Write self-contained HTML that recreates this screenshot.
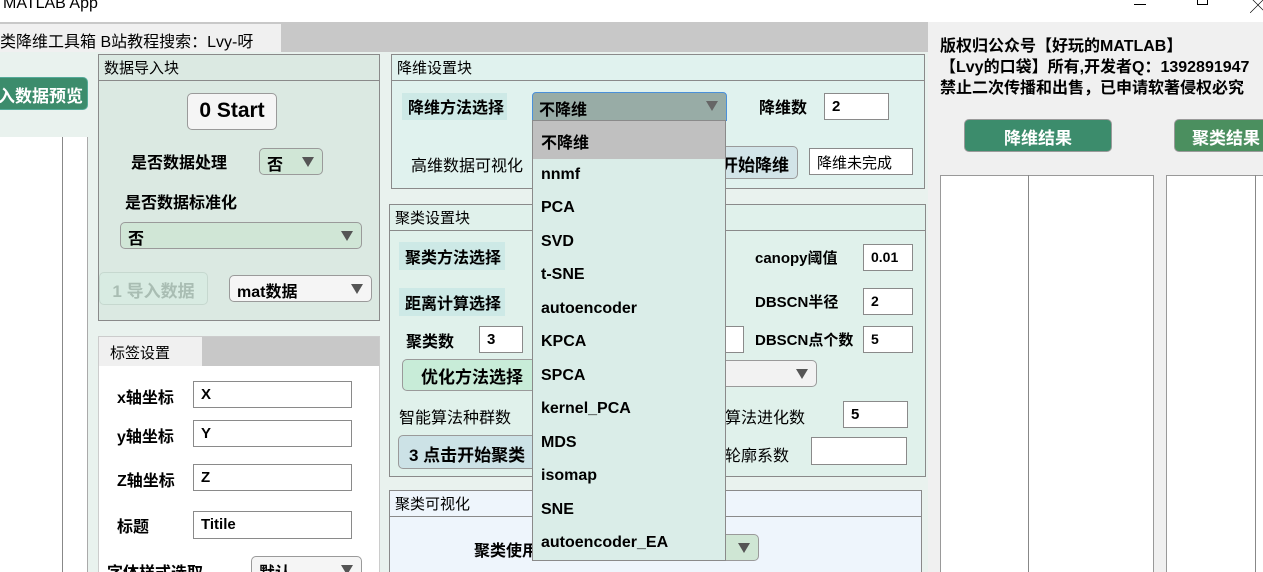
<!DOCTYPE html>
<html><head><meta charset="utf-8"><style>
*{margin:0;padding:0;box-sizing:border-box}
html,body{width:1263px;height:572px;overflow:hidden}
body{position:relative;background:#e9f2ee;font-family:"Liberation Sans","Noto Sans CJK SC",sans-serif;font-size:16px;color:#000}
div{white-space:nowrap}
.a{position:absolute}
.b{font-weight:bold}
.panel{position:absolute;border:1px solid #8a8a8a}
.hdr{position:absolute;left:0;right:0;top:0;height:26px;border-bottom:1px solid #8a8a8a;padding:2px 5px;font-size:15px}
.inp{position:absolute;background:#fff;border:1px solid #8a8a8a;padding:4px 7px;font-weight:bold;font-size:15px}
.dd{position:absolute;border:1px solid #9a9a9a;border-radius:5px;padding:2px 7px;font-weight:bold}
.arr{position:absolute;right:8px;top:8px;width:0;height:0;border-left:6px solid transparent;border-right:6px solid transparent;border-top:10px solid #555}
.btn{position:absolute;border:1px solid #9a9a9a;border-radius:5px;font-weight:bold;text-align:center}
.it{position:absolute;left:0;right:0;height:34px;padding:4px 8px;font-weight:bold}
</style></head><body>
<div class="a" style="left:0;top:0;width:1263px;height:22px;background:#fff"></div>
<div class="a" style="left:3px;top:-5px;font-size:16px">MATLAB App</div>
<div class="a" style="left:1134px;top:4px;width:12px;height:1px;background:#000"></div>
<div class="a" style="left:1197px;top:-6px;width:11px;height:11px;border:1px solid #000"></div>
<div class="a" style="left:1250px;top:-8px;font-size:16px">╳</div>
<div class="a" style="left:0;top:22px;width:928px;height:30px;background:#c8c8c8"></div>
<div class="a" style="left:0;top:24px;width:281px;height:28px;background:#f0f0f0;padding:4px 0 0 0;font-size:16px">类降维工具箱 B站教程搜索：Lvy-呀</div>

<div class="btn" style="left:-10px;top:77px;width:98px;height:33px;background:#3c8c6c;color:#fff;border-color:#5a9;padding-top:4px;font-size:17px;text-align:right;padding-right:4px">入数据预览</div>
<div class="a" style="left:0;top:137px;width:88px;height:440px;background:#fff;border-right:1px solid #aaa"></div>
<div class="a" style="left:62px;top:137px;width:1px;height:440px;background:#888"></div>

<div class="panel" style="left:98px;top:54px;width:282px;height:267px;background:#dbe9e2">
<div class="hdr">数据导入块</div>
<div class="btn" style="left:88px;top:38px;width:90px;height:37px;background:#f5f5f5;font-size:21px;padding-top:5px">0 Start</div>
<div class="a b" style="left:32px;top:94px">是否数据处理</div>
<div class="dd" style="left:160px;top:93px;width:64px;height:27px;background:#d0e6d6">否<span class="arr"></span></div>
<div class="a b" style="left:26px;top:134px">是否数据标准化</div>
<div class="dd" style="left:21px;top:167px;width:242px;height:27px;background:#d0e6d6">否<span class="arr"></span></div>
<div class="btn" style="left:0;top:217px;width:109px;height:33px;background:#d8ebe2;color:#a9bdb3;border-color:#c6d8cf;padding-top:4px;font-size:17px">1 导入数据</div>
<div class="dd" style="left:130px;top:220px;width:143px;height:27px;background:#f5f5f5">mat数据<span class="arr"></span></div>
</div>

<div class="a" style="left:98px;top:336px;width:282px;height:236px;background:#fff;border:1px solid #ccc;border-bottom:none"></div>
<div class="a" style="left:99px;top:337px;width:280px;height:29px;background:#c8c8c8"></div>
<div class="a" style="left:99px;top:337px;width:103px;height:29px;background:#f0f0f0;padding:5px 11px;font-size:15px">标签设置</div>
<div class="a b" style="left:117px;top:384px">x轴坐标</div><div class="inp" style="left:193px;top:381px;width:159px;height:27px">X</div>
<div class="a b" style="left:117px;top:423px">y轴坐标</div><div class="inp" style="left:193px;top:420px;width:159px;height:27px">Y</div>
<div class="a b" style="left:117px;top:467px">Z轴坐标</div><div class="inp" style="left:193px;top:464px;width:159px;height:27px">Z</div>
<div class="a b" style="left:117px;top:513px">标题</div><div class="inp" style="left:193px;top:511px;width:159px;height:28px">Titile</div>
<div class="a b" style="left:107px;top:559px">字体样式选取</div>
<div class="dd" style="left:251px;top:556px;width:111px;height:27px;background:#f5f5f5">默认<span class="arr"></span></div>

<div class="panel" style="left:391px;top:54px;width:534px;height:135px;background:#e0f2ee">
<div class="hdr">降维设置块</div>
<div class="a b" style="left:10px;top:38px;width:105px;height:27px;background:#cde9e6;padding:1px 6px">降维方法选择</div>
<div class="a b" style="left:367px;top:39px">降维数</div>
<div class="inp" style="left:432px;top:38px;width:65px;height:27px">2</div>
<div class="a" style="left:19px;top:97px">高维数据可视化</div>
<div class="btn" style="left:300px;top:91px;width:106px;height:33px;background:#d2e4e8;padding-top:4px;font-size:17px;text-align:right;padding-right:8px">开始降维</div>
<div class="inp" style="left:417px;top:93px;width:104px;height:27px;font-weight:normal;padding-top:3px">降维未完成</div>
</div>

<div class="panel" style="left:389px;top:204px;width:537px;height:273px;background:#e0f1eb">
<div class="hdr">聚类设置块</div>
<div class="a b" style="left:9px;top:37px;width:106px;height:28px;background:#cde9e6;padding:2px 6px">聚类方法选择</div>
<div class="a b" style="left:9px;top:83px;width:106px;height:28px;background:#cde9e6;padding:2px 6px">距离计算选择</div>
<div class="a b" style="left:16px;top:123px">聚类数</div>
<div class="inp" style="left:89px;top:121px;width:44px;height:27px">3</div>
<div class="inp" style="left:310px;top:121px;width:44px;height:27px"></div>
<div class="a b" style="left:365px;top:42px;font-size:15px">canopy阈值</div>
<div class="inp" style="left:473px;top:39px;width:50px;height:27px;font-size:14px">0.01</div>
<div class="a b" style="left:365px;top:86px;font-size:15px">DBSCN半径</div>
<div class="inp" style="left:473px;top:83px;width:50px;height:27px;font-size:14px">2</div>
<div class="a b" style="left:365px;top:124px;font-size:15px">DBSCN点个数</div>
<div class="inp" style="left:473px;top:121px;width:50px;height:27px;font-size:14px">5</div>
<div class="btn" style="left:12px;top:154px;width:140px;height:32px;background:#c8ecd8;padding-top:3px;font-size:17px">优化方法选择</div>
<div class="dd" style="left:300px;top:155px;width:127px;height:27px;background:#f2f2f2"><span class="arr"></span></div>
<div class="a" style="left:9px;top:199px">智能算法种群数</div>
<div class="a" style="left:319px;top:199px">能算法进化数</div>
<div class="inp" style="left:453px;top:196px;width:65px;height:27px">5</div>
<div class="btn" style="left:8px;top:230px;width:140px;height:34px;background:#cce2e6;padding-top:5px;font-size:17px;text-align:left;padding-left:10px">3 点击开始聚类</div>
<div class="a" style="left:319px;top:237px">类轮廓系数</div>
<div class="inp" style="left:421px;top:232px;width:96px;height:28px"></div>
</div>

<div class="panel" style="left:389px;top:490px;width:533px;height:90px;background:#eef5fc">
<div class="hdr">聚类可视化</div>
<div class="a b" style="left:84px;top:46px">聚类使用</div>
<div class="dd" style="left:300px;top:43px;width:69px;height:27px;background:#cfe6d4"><span class="arr"></span></div>
</div>

<div class="a b" style="left:532px;top:92px;width:195px;height:29px;background:#98aca6;border:1px solid #4a90d9;border-radius:4px 4px 0 0;padding:3px 6px">不降维<span class="arr" style="border-top-color:#666;top:8px"></span></div>
<div class="a" style="left:532px;top:120px;width:194px;height:441px;background:#daede8;border:1px solid #8a8a8a">
<div class="it" style="top:0;height:38px;background:#c0c0c0;padding-top:8px">不降维</div>
<div class="it" style="top:41px">nnmf</div>
<div class="it" style="top:74px">PCA</div>
<div class="it" style="top:108px">SVD</div>
<div class="it" style="top:141px">t-SNE</div>
<div class="it" style="top:175px">autoencoder</div>
<div class="it" style="top:208px">KPCA</div>
<div class="it" style="top:242px">SPCA</div>
<div class="it" style="top:275px">kernel_PCA</div>
<div class="it" style="top:309px">MDS</div>
<div class="it" style="top:342px">isomap</div>
<div class="it" style="top:376px">SNE</div>
<div class="it" style="top:409px">autoencoder_EA</div>
</div>

<div class="a" style="left:928px;top:22px;width:335px;height:550px;background:#f0f0f0"></div>
<div class="a b" style="left:940px;top:36px;line-height:21px">版权归公众号【好玩的MATLAB】<br>【Lvy的口袋】所有,开发者Q：1392891947<br>禁止二次传播和出售，已申请软著侵权必究</div>
<div class="btn" style="left:964px;top:119px;width:148px;height:33px;background:#3c8c6c;color:#fff;padding-top:4px;font-size:17px">降维结果</div>
<div class="btn" style="left:1174px;top:119px;width:120px;height:33px;background:#4b8f5f;color:#fff;padding-top:4px;font-size:17px;text-align:left;padding-left:17px">聚类结果</div>
<div class="a" style="left:940px;top:175px;width:214px;height:400px;background:#fff;border:1px solid #999"></div>
<div class="a" style="left:1028px;top:175px;width:1px;height:400px;background:#888"></div>
<div class="a" style="left:1166px;top:175px;width:110px;height:400px;background:#fff;border:1px solid #999"></div>
<div class="a" style="left:1255px;top:175px;width:1px;height:400px;background:#888"></div>
</body></html>
